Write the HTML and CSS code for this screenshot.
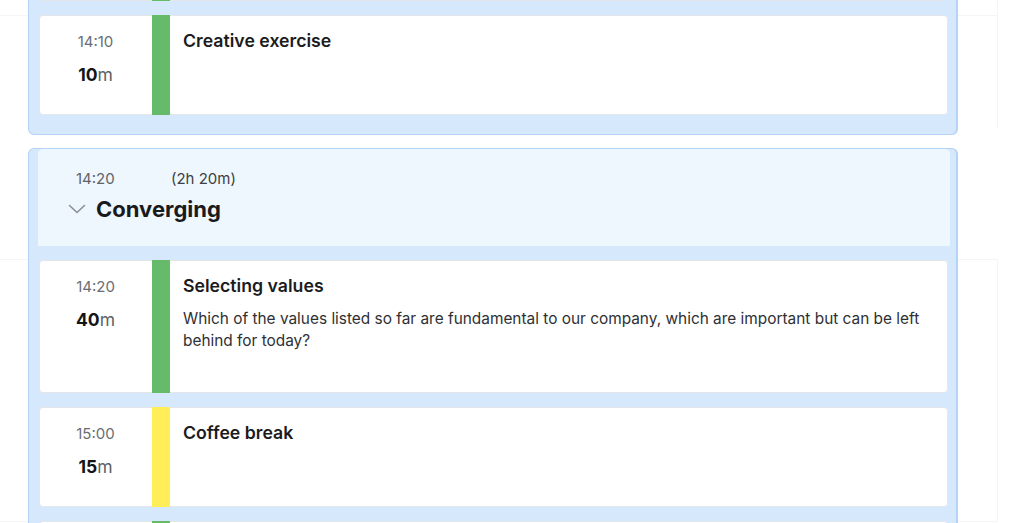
FILE: index.html
```html
<!DOCTYPE html>
<html lang="en">
<head>
<meta charset="utf-8">
<title>Agenda</title>
<link rel="stylesheet" href="styles.css">
</head>
<body>
<div class="backdrop" aria-hidden="true">
  <div class="bg-line h l1"></div>
  <div class="bg-line h l2"></div>
  <div class="bg-line h l3"></div>
  <div class="bg-line v v1"></div>
  <div class="bg-line v v2"></div>
</div>
<main class="agenda">
  <section class="block first">
    <div class="item stub" aria-hidden="true">
      <div class="when"></div>
      <div class="bar green"></div>
      <div class="body"></div>
    </div>
    <div class="item">
      <div class="when">
        <div class="time">14:10</div>
        <div class="dur"><b>10</b>m</div>
      </div>
      <div class="bar green"></div>
      <div class="body"><div class="title">Creative exercise</div></div>
    </div>
  </section>

  <section class="block">
    <header class="block-head">
      <div class="head-meta">
        <span class="head-time">14:20</span>
        <span class="head-total">(2h 20m)</span>
      </div>
      <div class="head-title-row">
        <svg class="chev" width="18" height="10" viewBox="0 0 18 10"><path d="M1.5 1.5 L9 8.5 L16.5 1.5" fill="none" stroke="#8a8f96" stroke-width="1.6" stroke-linecap="round" stroke-linejoin="round"/></svg>
        <h2 class="head-title">Converging</h2>
      </div>
    </header>
    <div class="item">
      <div class="when">
        <div class="time">14:20</div>
        <div class="dur"><b>40</b>m</div>
      </div>
      <div class="bar green"></div>
      <div class="body">
        <div class="title">Selecting values</div>
        <p class="desc">Which of the values listed so far are fundamental to our company, which are important but can be left behind for today?</p>
      </div>
    </div>
    <div class="item">
      <div class="when">
        <div class="time">15:00</div>
        <div class="dur"><b>15</b>m</div>
      </div>
      <div class="bar yellow"></div>
      <div class="body"><div class="title">Coffee break</div></div>
    </div>
    <div class="item stub" aria-hidden="true">
      <div class="when"></div>
      <div class="bar green"></div>
      <div class="body"></div>
    </div>
  </section>
</main>
</body>
</html>
```

FILE: styles.css
```css
* { box-sizing: border-box; }

html, body {
  margin: 0;
  padding: 0;
  background: #ffffff;
  overflow: hidden;
}

body {
  font-family: Inter, "Noto Sans", "Liberation Sans", sans-serif;
  color: #1c1c1e;
  position: relative;
  height: 523px;
}

.backdrop {
  position: absolute;
  inset: 0;
  z-index: 0;
}

.bg-line {
  position: absolute;
  background: #f3f5f8;
}
.bg-line.h { height: 1px; left: 0; width: 998px; }
.bg-line.v { width: 1px; left: 997px; }
.l1 { top: 15px; }
.l2 { top: 259px; }
.l3 { top: 521px; }
.v1 { top: 0; height: 128px; }
.v2 { top: 259px; height: 262px; }

.agenda {
  position: relative;
  z-index: 1;
  width: 958px;
  padding-left: 28px;
  margin-top: -114px;
  display: flex;
  flex-direction: column;
  gap: 13px;
}

.block {
  background: #d6e8fb;
  border: 1px solid #b4d3f6;
  border-right-width: 2px;
  border-radius: 6px;
  padding: 14px 8px 19px 10px;
  display: flex;
  flex-direction: column;
  gap: 14px;
}

.block-head {
  background: #eef6fe;
  margin: -14px -2px 0 -1px;
  padding: 20px 0 23px 0;
  border-radius: 5px 5px 0 0;
}

.head-meta {
  display: flex;
  align-items: center;
  height: 20px;
  padding-left: 38px;
  font-size: 15px;
  line-height: 20px;
}

.head-time {
  width: 95px;
  color: #5f6368;
}

.head-total {
  color: #3d3f43;
}

.head-title-row {
  display: flex;
  align-items: center;
  margin-top: 6px;
  padding-left: 30px;
  gap: 10px;
  height: 28px;
}

.chev { display: block; margin-top: -1px; }

.head-title {
  margin: 0;
  font-size: 22px;
  line-height: 28px;
  font-weight: 700;
  color: #1a1a1c;
}

.item {
  display: grid;
  grid-template-columns: 112px 18px 1fr;
  min-height: 100px;
  background: #ffffff;
  border: 1px solid #e3e7ec;
  border-radius: 4px;
}

.when {
  padding-top: 16px;
  text-align: center;
  margin-left: -1px;
}

.time {
  font-size: 15px;
  line-height: 20px;
  color: #6a6d72;
}

.dur {
  margin-top: 13px;
  font-size: 17.5px;
  line-height: 20px;
  color: #5c5f64;
}

.dur b {
  font-weight: 700;
  color: #151517;
}

.bar { margin: -1px 0; }
.bar.green { background: #66bb6a; }
.bar.yellow { background: #ffee58; }

.body {
  padding: 15px 16px 40px 13px;
}

.title {
  font-size: 17.7px;
  line-height: 20px;
  font-weight: 600;
  color: #1b1b1d;
}

.desc {
  margin: 12px 0 0;
  font-size: 15.4px;
  line-height: 22px;
  color: #2e3033;
}
```
